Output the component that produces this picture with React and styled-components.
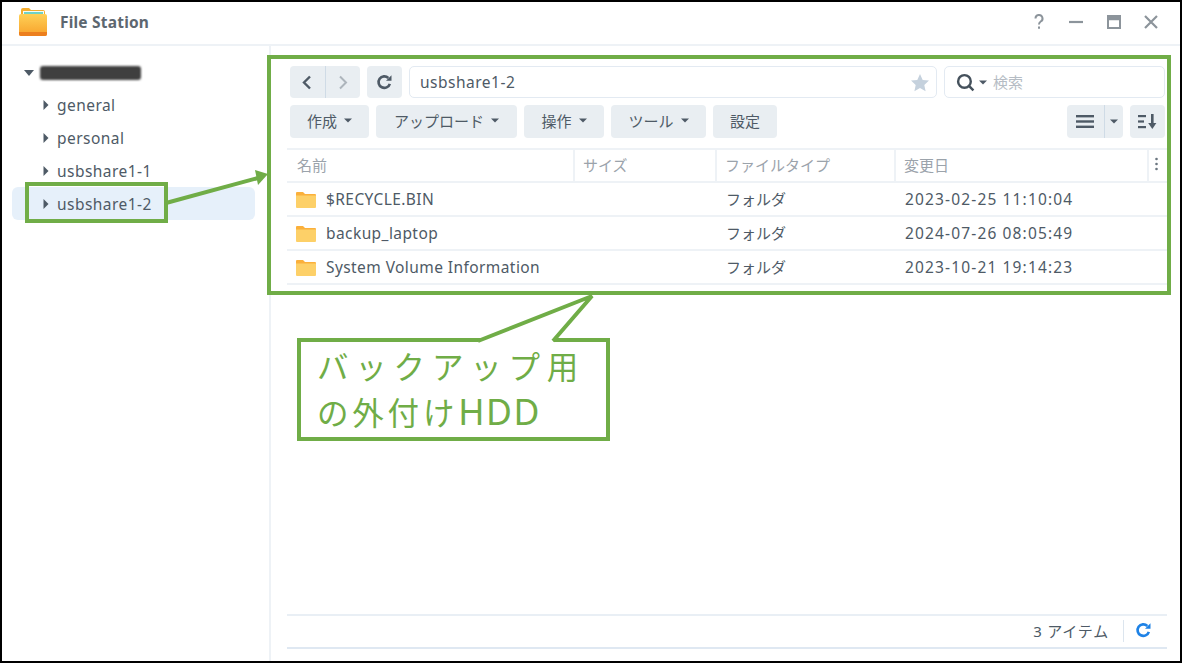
import React from "react";
import styled, { createGlobalStyle } from "styled-components";

const Global = createGlobalStyle`
  html, body { margin: 0; padding: 0; background: #fff; }
  * { box-sizing: border-box; }
`;

const GREEN = "#70ad47";
const INK = "#4e5a66";
const STACK = `"Noto Sans", "Noto Sans CJK JP", sans-serif`;

const Frame = styled.div`
  position: relative; width: 1182px; height: 663px; border: 2px solid #000; background: #fff;
  display: flex; flex-direction: column; overflow: hidden;
  font-family: ${STACK}; color: ${INK};
`;
const TitleBar = styled.header`
  height: 44px; flex: none; display: flex; align-items: center; padding: 0 18px 2px 17px;
  border-bottom: 2px solid #eef2f6;
`;
const AppName = styled.div`
  margin-left: 13px; font-size: 15.5px; font-weight: 700; color: #5d6770; letter-spacing: .2px;
`;
const WinButtons = styled.div`
  margin-left: auto; display: flex; align-items: center; gap: 15.5px;
  svg { width: 22px; height: 22px; display: block; }
`;
const Body = styled.div` flex: 1; display: flex; min-height: 0; `;
const Sidebar = styled.aside`
  width: 269px; flex: none; border-right: 2px solid #eef2f6; padding: 12px 14px 0 10px;
`;
const TreeRow = styled.div`
  height: ${p => (p.$root ? 30 : 33)}px; border-radius: 6px; display: flex; align-items: center; font-size: 15.5px;
  padding-left: ${p => (p.$root ? 12 : 31)}px; gap: ${p => (p.$root ? 6 : 8)}px; letter-spacing: .45px;
  background: ${p => (p.$active ? "#e6f0fa" : "transparent")};
`;
const Caret = styled.svg` width: 6px; height: 10px; flex: none; `;
const Redacted = styled.div`
  width: 101px; height: 14px; background: #3f3f3f; filter: blur(1px); border-radius: 3px;
`;
const Main = styled.main`
  flex: 1; min-width: 0; display: flex; flex-direction: column; padding: 20px 13px 12px 16px;
`;
const ToolRow = styled.div`
  display: flex; gap: 7px; height: ${p => p.$h}px; padding: 0 2px 0 3px; margin-bottom: ${p => p.$mb || 0}px; flex: none;
`;
const Btn = styled.button`
  width: ${p => p.$w}px; height: 100%; flex: none; border: 0; border-radius: 4px; background: #e9eef2; padding: 0 0 ${p => (p.$icon ? 0 : 2)}px;
  display: flex; align-items: center; justify-content: center; gap: 7px;
  font: 400 15px ${STACK}; color: ${INK};
`;
const Group = styled.div`
  width: ${p => p.$w}px; height: 100%; flex: none; border-radius: 4px; background: #e9eef2; display: flex;
`;
const Seg = styled.div`
  flex: ${p => p.$grow || 1}; display: flex; align-items: center; justify-content: center;
  & + & { border-left: 1px solid #cfdbe6; }
`;
const PathField = styled.div`
  width: 528px; flex: none; height: 100%; border: 1.5px solid #e3eaf2; border-radius: 5px; display: flex; align-items: center;
  padding: 0 6px 0 10px; font-size: 15.5px; letter-spacing: .5px;
  svg { margin-left: auto; }
`;
const SearchField = styled.div`
  flex: 1; height: 100%; border: 1.5px solid #e3eaf2; border-radius: 5px; display: flex; align-items: center;
  padding-left: 11px; gap: 4px; font-size: 15px; color: #b5bcc4;
`;
const SearchLabel = styled.span` margin-left: 2px; padding-bottom: 2px; `;
const Push = styled.div` margin-left: auto; display: flex; gap: 7px; height: 100%; `;
const TableHead = styled.div`
  height: 35px; flex: none; display: flex; border-top: 2px solid #eef2f6; border-bottom: 2px solid #eef2f6;
`;
const HeadCell = styled.div`
  width: ${p => p.$w}px; flex: none; padding: 0 0 3px ${p => (p.$first ? 10 : 8)}px; display: flex; align-items: center;
  font-size: 15px; color: #9ba3ab; border-left: ${p => (p.$first ? "0" : "2px solid #eef2f6")};
`;
const MenuDots = styled.svg` margin-left: -2px; `;
const Row = styled.div`
  height: 34px; flex: none; display: flex; align-items: center; border-bottom: 2px solid #eef2f6;
  font-size: 15.5px;
`;
const NameCell = styled.div` width: 439px; flex: none; display: flex; align-items: center; gap: 10px; padding-left: 9px; letter-spacing: .42px; `;
const TypeCell = styled.div` width: 179px; flex: none; font-size: 15px; padding-bottom: 1px; `;
const DateCell = styled.div` flex: 1; letter-spacing: 1.15px; `;
const Spacer = styled.div` flex: 1; `;
const Footer = styled.footer`
  height: 35px; flex: none; display: flex; align-items: center; justify-content: flex-end;
  border-top: 2px solid #e9eff5; border-bottom: 2px solid #dfe8f2; font-size: 15px; padding: 0 15px 2px 0; letter-spacing: .8px;
`;
const FootDivider = styled.span` width: 1px; height: 22px; background: #dce5ee; margin: 0 11px 0 14px; `;

const Highlight = styled.div`
  position: absolute; left: ${p => p.$x}px; top: ${p => p.$y}px; width: ${p => p.$w}px; height: ${p => p.$h}px;
  border: 4px solid ${GREEN};
`;
const Overlay = styled.svg` position: absolute; left: 0; top: 0; width: 1178px; height: 659px; pointer-events: none; `;
const Callout = styled.div`
  position: absolute; left: 295px; top: 336px; width: 313px; height: 103px; border: 4px solid ${GREEN}; background: #fff;
  padding: 0 0 0 16px; color: ${GREEN};
  font-family: "Noto Sans CJK JP", "Noto Sans", sans-serif; font-weight: 400;
`;
const CalloutLine = styled.div`
  font-size: 31.5px; height: 46px; line-height: 46px; white-space: nowrap; letter-spacing: ${p => p.$ls}px;
`;
const Hdd = styled.span`
  font-family: "Noto Sans", sans-serif; font-size: 35.5px; line-height: 1; letter-spacing: 1.5px;
`;
const CalloutTail = styled.svg` position: absolute; left: 468px; top: 290px; width: 130px; height: 52px; `;

const Down = ({ c = INK }) => (
  <svg width="8" height="5" viewBox="0 0 8 5"><path d="M0 .5h8L4 4.5z" fill={c} /></svg>
);
const Right = () => (
  <Caret viewBox="0 0 6 10"><path d="M.5 0 5.5 5 .5 10z" fill={INK} /></Caret>
);
const Refresh = ({ c = INK, s = 17 }) => (
  <svg width={s} height={s} viewBox="0 0 16 16" fill="none">
    <path d="M13 9.2A5.4 5.4 0 1 1 11.6 3.8" stroke={c} strokeWidth="2.5" strokeLinecap="butt" />
    <path d="M9.4 6.4h5.2V1.2z" fill={c} />
  </svg>
);
const Folder = () => (
  <svg width="20" height="17" viewBox="0 0 20 17">
    <path d="M0 2a1 1 0 0 1 1-1h6l2 2h10a1 1 0 0 1 1 1v2H0z" fill="#fbb03b" />
    <path d="M0 4.5h20V16a1 1 0 0 1-1 1H1a1 1 0 0 1-1-1z" fill="#fdd068" />
  </svg>
);
const AppIcon = () => (
  <svg width="28" height="28" viewBox="0 0 28 28">
    <defs>
      <linearGradient id="fsBody" x1="0" y1="0" x2="0" y2="1">
        <stop offset="0" stopColor="#fed057" />
        <stop offset="1" stopColor="#f8a12a" />
      </linearGradient>
    </defs>
    <path d="M2 2a2 2 0 0 1 2-2h6l2 2h12a2 2 0 0 1 2 2v6H2z" fill="#f5ad2e" />
    <rect x="4" y="3" width="21" height="7" fill="#f4fbf8" />
    <rect x="5" y="4" width="19" height="2" fill="#70d2c6" />
    <path d="M0 8a2 2 0 0 1 2-2h24a2 2 0 0 1 2 2v18a2 2 0 0 1-2 2H2a2 2 0 0 1-2-2z" fill="url(#fsBody)" />
    <path d="M0 24h28v2a2 2 0 0 1-2 2H2a2 2 0 0 1-2-2z" fill="#ec7f1e" />
  </svg>
);

const rows = [
  ["$RECYCLE.BIN", "2023-02-25 11:10:04"],
  ["backup_laptop", "2024-07-26 08:05:49"],
  ["System Volume Information", "2023-10-21 19:14:23"],
];

export default function App() {
  return (
    <>
      <Global />
      <Frame>
        <TitleBar>
          <AppIcon />
          <AppName>File Station</AppName>
          <WinButtons>
            <svg viewBox="0 0 22 22" fill="none" stroke="#8c949b" strokeWidth="2">
              <path d="M7.5 7.5a3.5 3.5 0 1 1 5.2 3c-1.2.8-1.7 1.4-1.7 3" />
              <path d="M11 15.5v2.2" />
            </svg>
            <svg viewBox="0 0 22 22" fill="none" stroke="#8c949b" strokeWidth="2.2"><path d="M4 11h14" /></svg>
            <svg viewBox="0 0 22 22" fill="none" stroke="#8c949b" strokeWidth="2">
              <rect x="5" y="5" width="12" height="12" />
              <path d="M5 7.5h12" strokeWidth="3.5" />
            </svg>
            <svg viewBox="0 0 22 22" fill="none" stroke="#8c949b" strokeWidth="2.2"><path d="m5 5 12 12M17 5 5 17" /></svg>
          </WinButtons>
        </TitleBar>
        <Body>
          <Sidebar>
            <TreeRow $root>
              <svg width="10" height="6" viewBox="0 0 10 6"><path d="M0 0h10L5 6z" fill={INK} /></svg>
              <Redacted />
            </TreeRow>
            <TreeRow><Right />general</TreeRow>
            <TreeRow><Right />personal</TreeRow>
            <TreeRow><Right />usbshare1-1</TreeRow>
            <TreeRow $active><Right />usbshare1-2</TreeRow>
          </Sidebar>
          <Main>
            <ToolRow $h={32} $mb={7}>
              <Group $w={70}>
                <Seg>
                  <svg width="10" height="15" viewBox="0 0 10 15" fill="none" stroke={INK} strokeWidth="2.4"><path d="M8 1.5 2 7.5l6 6" /></svg>
                </Seg>
                <Seg>
                  <svg width="10" height="15" viewBox="0 0 10 15" fill="none" stroke="#adb5bc" strokeWidth="2"><path d="m2 1.5 6 6-6 6" /></svg>
                </Seg>
              </Group>
              <Btn $w={35} $icon><Refresh /></Btn>
              <PathField>
                usbshare1-2
                <svg width="20" height="19" viewBox="0 0 20 19"><path d="m10 1 2.7 5.9 6.3.7-4.7 4.3 1.3 6.3L10 15.1l-5.6 3.1 1.3-6.3L1 7.6l6.3-.7z" fill="#c5d1dd" /></svg>
              </PathField>
              <SearchField>
                <svg width="19" height="19" viewBox="0 0 18 18" fill="none" stroke="#45515c" strokeWidth="2.3">
                  <circle cx="8" cy="8" r="6" />
                  <path d="m12.5 12.5 4 4" />
                </svg>
                <Down />
                <SearchLabel>検索</SearchLabel>
              </SearchField>
            </ToolRow>
            <ToolRow $h={33} $mb={10}>
              <Btn $w={79}>作成<Down /></Btn>
              <Btn $w={141}>アップロード<Down /></Btn>
              <Btn $w={80}>操作<Down /></Btn>
              <Btn $w={95}>ツール<Down /></Btn>
              <Btn $w={64}>設定</Btn>
              <Push>
                <Group $w={56}>
                  <Seg $grow={2}>
                    <svg width="18" height="13" viewBox="0 0 18 13" fill={INK}><rect width="18" height="2.4" /><rect y="5.3" width="18" height="2.4" /><rect y="10.6" width="18" height="2.4" /></svg>
                  </Seg>
                  <Seg>
                    <Down />
                  </Seg>
                </Group>
                <Btn $w={35} $icon>
                  <svg width="20" height="15" viewBox="0 0 20 15" fill={INK}>
                    <rect width="8" height="2.2" y="1" /><rect width="6" height="2.2" y="6.4" /><rect width="8" height="2.2" y="12" />
                    <rect x="13" y="0" width="2.6" height="10" /><path d="M10.2 9h8.2l-4.1 6z" />
                  </svg>
                </Btn>
              </Push>
            </ToolRow>
            <TableHead>
              <HeadCell $w={286} $first>名前</HeadCell>
              <HeadCell $w={142}>サイズ</HeadCell>
              <HeadCell $w={179}>ファイルタイプ</HeadCell>
              <HeadCell $w={253}>変更日</HeadCell>
              <HeadCell $w={19}>
                <MenuDots width="3" height="14" viewBox="0 0 3 14" fill="#6b7680"><circle cx="1.5" cy="2" r="1.3" /><circle cx="1.5" cy="7" r="1.3" /><circle cx="1.5" cy="12" r="1.3" /></MenuDots>
              </HeadCell>
            </TableHead>
            {rows.map(([name, date]) => (
              <Row key={name}>
                <NameCell><Folder />{name}</NameCell>
                <TypeCell>フォルダ</TypeCell>
                <DateCell>{date}</DateCell>
              </Row>
            ))}
            <Spacer />
            <Footer>
              3 アイテム
              <FootDivider />
              <Refresh c="#1e82e6" s={17} />
            </Footer>
          </Main>
        </Body>
        <Highlight $x={265} $y={53} $w={904} $h={240} />
        <Highlight $x={23} $y={180} $w={143} $h={41} />
        <Overlay viewBox="0 0 1178 659">
          <path d="M164 201 256 176" stroke={GREEN} strokeWidth="4" fill="none" />
          <path d="M266 172 253 168 256 183z" fill={GREEN} />
        </Overlay>
        <Callout>
          <CalloutLine $ls={6.8}>バックアップ用</CalloutLine>
          <CalloutLine $ls={3.8}>の外付け<Hdd>HDD</Hdd></CalloutLine>
        </Callout>
        <CalloutTail viewBox="0 0 130 52">
          <path d="M8 50 122 4 83 50z" fill="#fff" />
          <path d="M8 49 122 4 83 49" fill="none" stroke={GREEN} strokeWidth="4" />
        </CalloutTail>
      </Frame>
    </>
  );
}
